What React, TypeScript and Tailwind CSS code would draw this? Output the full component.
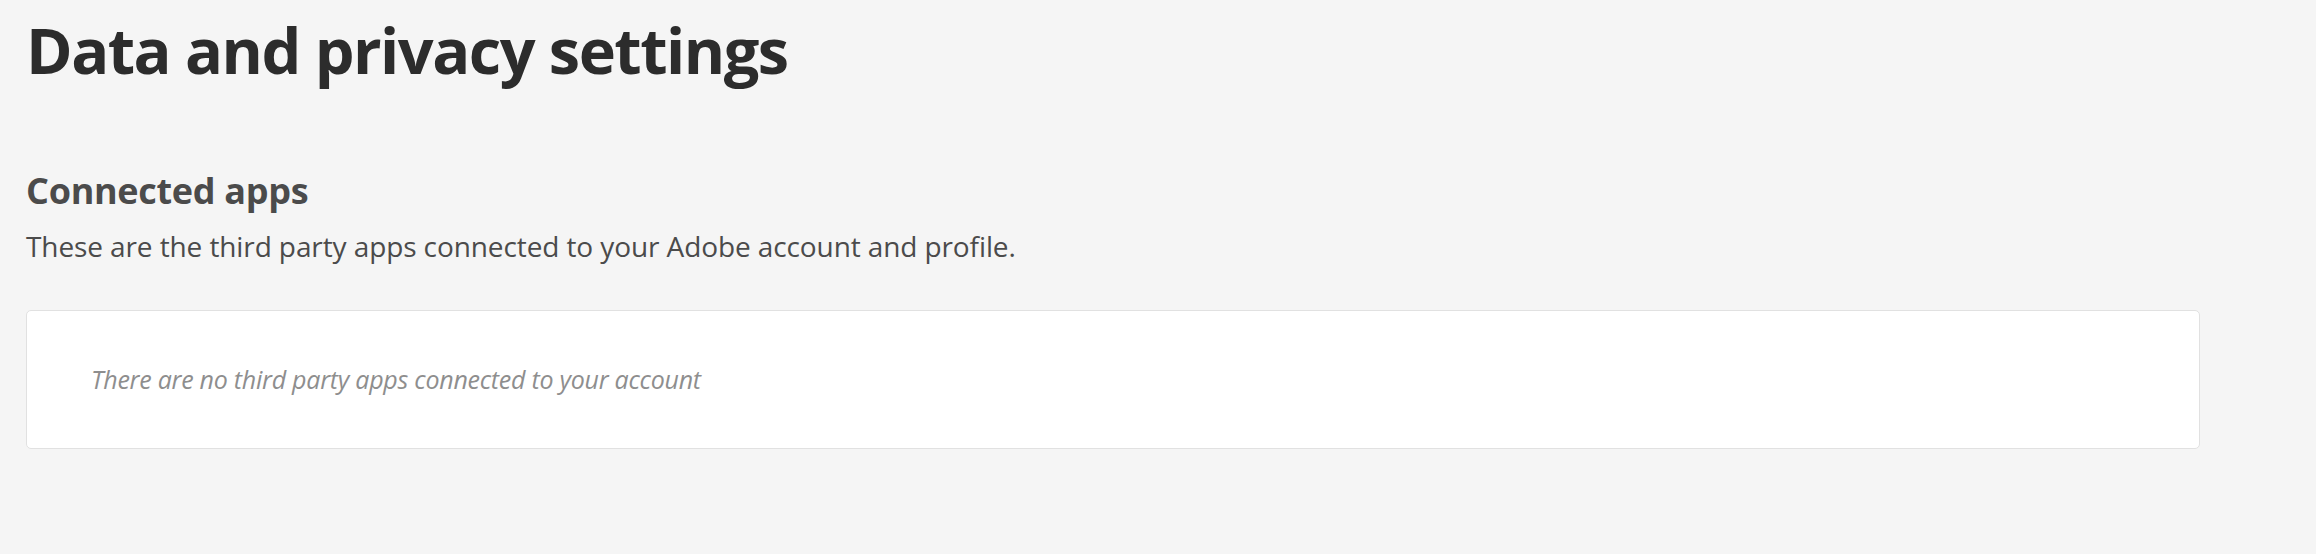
export default function App() {
  return (
    <div className="min-h-[554px] bg-[#f5f5f5] pl-[26px] pr-[116px] font-['Open_Sans',sans-serif]">
      <h1 className="pt-[18px] text-[63px] font-bold leading-none tracking-[-1.5px] text-[#2c2c2c]">
        Data and privacy settings
      </h1>
      <h2 className="mt-[92px] text-[36px] font-bold leading-none tracking-[-0.3px] text-[#4b4b4b]">
        Connected apps
      </h2>
      <p className="mt-[23px] text-[28px] leading-none tracking-[-0.1px] text-[#4b4b4b]">
        These are the third party apps connected to your Adobe account and profile.
      </p>
      <div className="mt-[50px] flex h-[139px] items-center rounded-[5px] border border-[#e1e1e1] bg-white pl-[64px]">
        <span className="text-[25px] italic leading-none tracking-[-0.25px] text-[#8e8e8e]">
          There are no third party apps connected to your account
        </span>
      </div>
    </div>
  );
}
